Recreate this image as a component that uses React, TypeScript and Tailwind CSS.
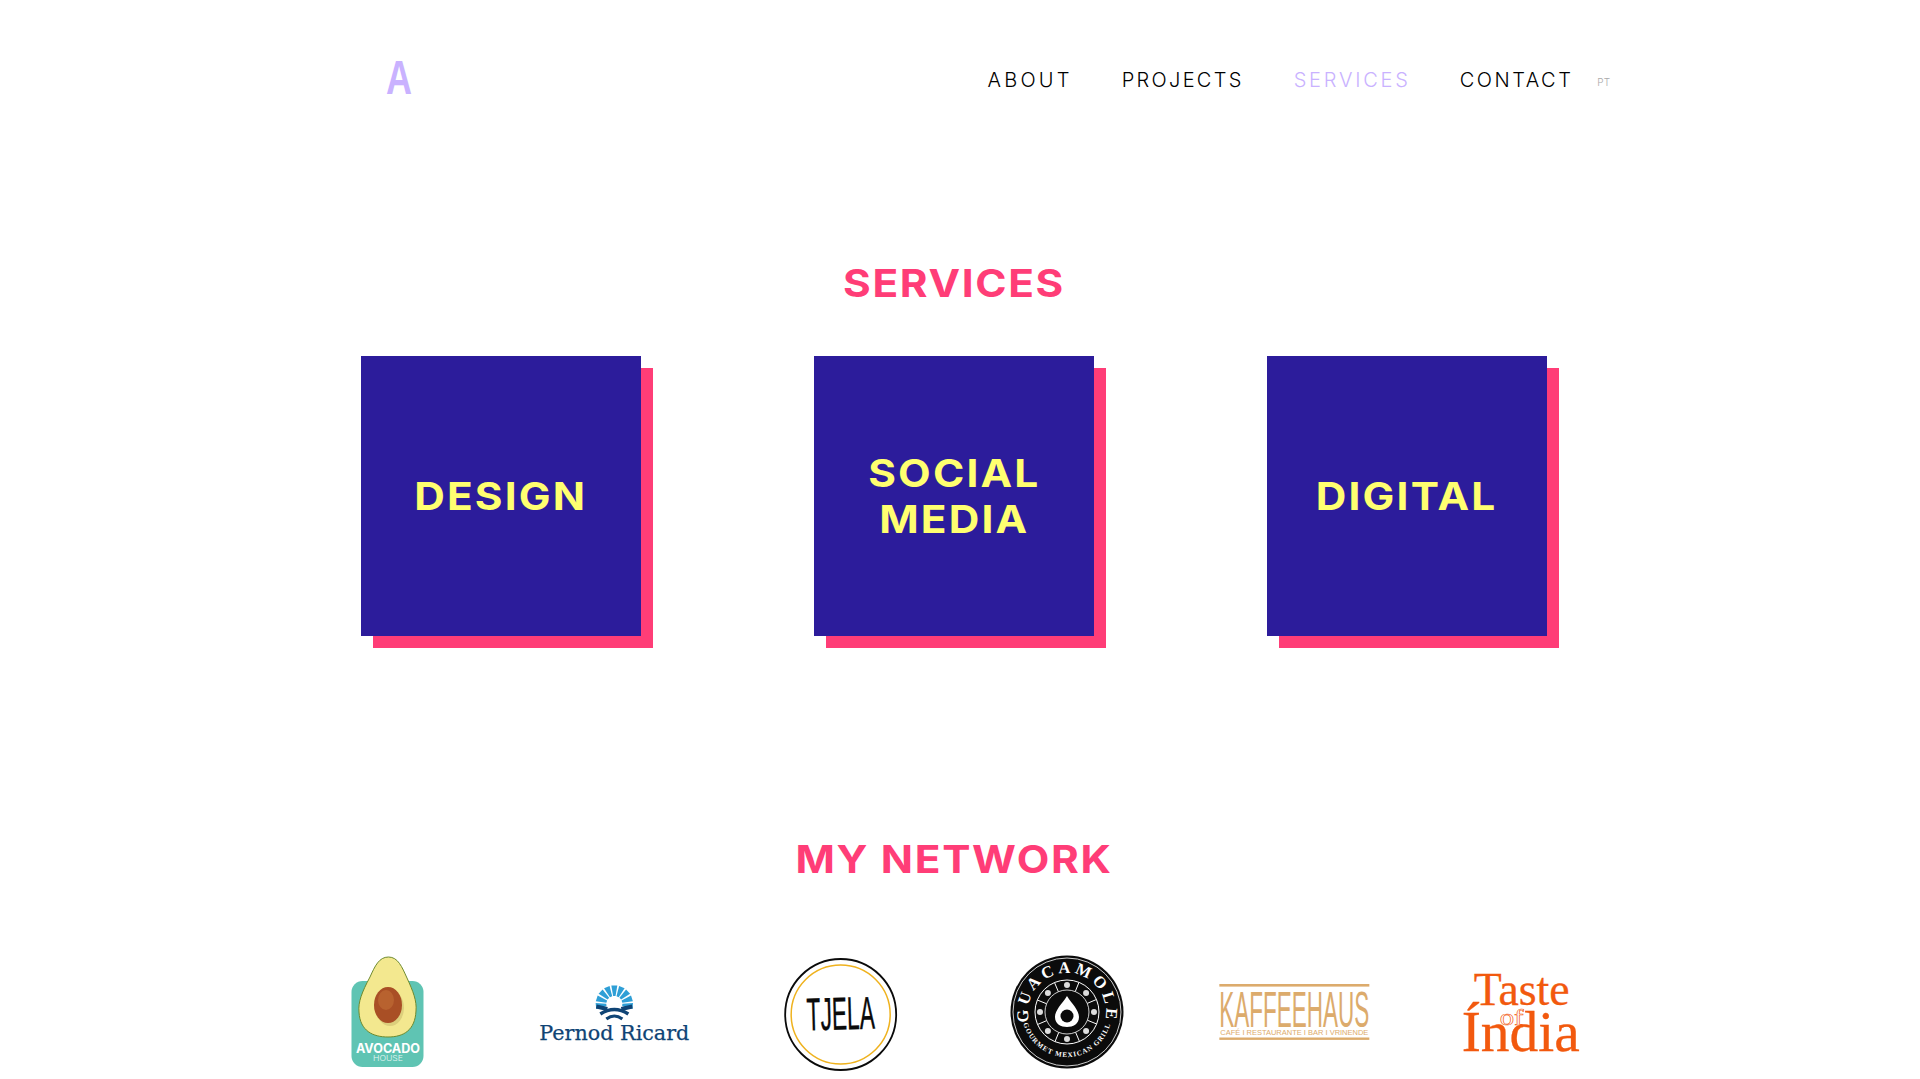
import React from "react";

const SANS = "font-['Inter','Liberation_Sans',sans-serif]";

function Logo({ i, children }: { i: number; children: React.ReactNode }) {
  const x0 = 274 + (1360 / 6) * i;
  return (
    <svg viewBox={`${x0} 950 ${1360 / 6} 129`} className="block h-[129px] w-full overflow-visible">
      {children}
    </svg>
  );
}

function Avocado() {
  return (
    <Logo i={0}>
      <rect x="351.5" y="981" width="72" height="86" rx="11" fill="#5fc4b3" />
      <path d="M388.5 957 C379 957 375 966 370 977 C362 992 358 1002 359 1012 C360 1031 373 1037 388 1037 C404 1037 415 1030 416 1011 C417 1001 413 991 407 978 C402 967 398 957 388.5 957 Z" fill="#f3e88f" stroke="#6d8a2e" strokeWidth="1" />
      <ellipse cx="390" cy="1008" rx="14" ry="18" fill="#dccf7c" />
      <ellipse cx="388" cy="1005" rx="14" ry="18" fill="#a94f25" />
      <ellipse cx="386" cy="1000" rx="8" ry="10" fill="#b8622f" />
      <text x="388" y="1053" textAnchor="middle" fontFamily="Inter" fontWeight="700" fontSize="12.5" fill="#fff" textLength="64" lengthAdjust="spacingAndGlyphs">AVOCADO</text>
      <text x="388" y="1061" textAnchor="middle" fontFamily="Inter" fontWeight="300" fontSize="7" fill="#e7f7f3" textLength="30" lengthAdjust="spacingAndGlyphs">HOUSE</text>
    </Logo>
  );
}

function Pernod() {
  const cx = 614;
  const cy = 1004;
  const rays = [-96, -72, -48, -24, 0, 24, 48, 72, 96];
  return (
    <Logo i={1}>
      {rays.map((a) => {
        const r = (a * Math.PI) / 180;
        const pt = (rad: number, off: number) =>
          `${cx + rad * Math.sin(r) + off * Math.cos(r)},${cy - rad * Math.cos(r) + off * Math.sin(r)}`;
        return <polygon key={a} points={`${pt(8, -1.2)} ${pt(8, 1.2)} ${pt(18.5, 3)} ${pt(18.5, -3)}`} fill="#2f9fd6" />;
      })}
      <path d="M596 1006.5 L607 1009 M632 1006.5 L621 1009" stroke="#0f4475" strokeWidth="4" />
      <path d="M600 1014 Q614 1005 628 1014" stroke="#0f4475" strokeWidth="3.5" fill="none" />
      <path d="M606 1019 Q614 1013 622 1019" stroke="#0f4475" strokeWidth="3" fill="none" />
      <text x="539" y="1040" fontFamily="DejaVu Serif" fontSize="21" fill="#0f4475" stroke="#0f4475" strokeWidth="0.25" textLength="150" lengthAdjust="spacingAndGlyphs">Pernod Ricard</text>
    </Logo>
  );
}

function Tjela() {
  return (
    <Logo i={2}>
      <circle cx="841" cy="1014.5" r="55.5" fill="#fff" stroke="#0a0a0a" strokeWidth="1.8" />
      <circle cx="841" cy="1014.5" r="49.5" fill="none" stroke="#efb21e" strokeWidth="1.5" />
      <text x="807" y="1029.5" fontFamily="Liberation Sans" fontSize="46" fill="#0a0a0a" stroke="#0a0a0a" strokeWidth="0.4" textLength="68" lengthAdjust="spacingAndGlyphs" transform="rotate(-1.5 841 1014)">TJELA</text>
    </Logo>
  );
}

function Guacamole() {
  const cx = 1067;
  const cy = 1012;
  const spokes = [22, 67, 112, 157, 202, 247, 292, 337];
  return (
    <Logo i={3}>
      <defs>
        <path id="g-top" d={`M ${cx - 37.7} ${cy + 10.1} A 39 39 0 1 1 ${cx + 37.7} ${cy + 10.1}`} />
        <path id="g-bot" d={`M ${cx - 43.1} ${cy + 13} A 45 45 0 0 0 ${cx + 43.1} ${cy + 13}`} />
      </defs>
      <circle cx={cx} cy={cy} r="56.5" fill="#0b0b0b" />
      <circle cx={cx} cy={cy} r="54" fill="none" stroke="#fff" strokeWidth="0.8" />
      <text fontFamily="Liberation Serif" fontWeight="700" fontSize="16.5" fill="#fff">
        <textPath href="#g-top" startOffset="50%" textAnchor="middle" letterSpacing="3.5">GUACAMOLE</textPath>
      </text>
      <text fontFamily="Liberation Serif" fontWeight="700" fontSize="7" fill="#fff">
        <textPath href="#g-bot" startOffset="50%" textAnchor="middle" letterSpacing="1">GOURMET MEXICAN GRILL</textPath>
      </text>
      <circle cx={cx} cy={cy} r="32" fill="none" stroke="#fff" strokeWidth="1" />
      <circle cx={cx} cy={cy} r="22" fill="none" stroke="#fff" strokeWidth="0.8" />
      {spokes.map((a) => (
        <line key={a} x1={cx + 22 * Math.cos((a * Math.PI) / 180)} y1={cy + 22 * Math.sin((a * Math.PI) / 180)} x2={cx + 32 * Math.cos((a * Math.PI) / 180)} y2={cy + 32 * Math.sin((a * Math.PI) / 180)} stroke="#fff" strokeWidth="1" />
      ))}
      {[0, 45, 90, 135, 180, 225, 270, 315].map((a) => (
        <circle key={a} cx={cx + 27 * Math.cos((a * Math.PI) / 180)} cy={cy + 27 * Math.sin((a * Math.PI) / 180)} r="3" fill="#ddd" />
      ))}
      <path d={`M ${cx} ${cy - 16} C ${cx - 5} ${cy - 8} ${cx - 12} ${cy - 2} ${cx - 12} ${cy + 5} C ${cx - 12} ${cy + 12} ${cx - 6} ${cy + 15} ${cx} ${cy + 15} C ${cx + 6} ${cy + 15} ${cx + 12} ${cy + 12} ${cx + 12} ${cy + 5} C ${cx + 12} ${cy - 2} ${cx + 5} ${cy - 8} ${cx} ${cy - 16} Z`} fill="#fff" />
      <circle cx={cx} cy={cy + 4} r="6.5" fill="#0b0b0b" />
    </Logo>
  );
}

function Kaffee() {
  const c = "#dcab6c";
  return (
    <Logo i={4}>
      <rect x="1219" y="984" width="150" height="2.6" fill={c} />
      <rect x="1219" y="1037.5" width="150" height="2.4" fill={c} />
      <text x="1219" y="1026.5" fontFamily="Liberation Sans" fontSize="50" fill={c} textLength="150" lengthAdjust="spacingAndGlyphs">KAFFEEHAUS</text>
      <text x="1220" y="1035" fontFamily="Liberation Sans" fontSize="7.5" fill={c} textLength="148" lengthAdjust="spacingAndGlyphs">CAFÉ I RESTAURANTE I BAR I VRINENDE</text>
    </Logo>
  );
}

function Taste() {
  const c = "#f2590e";
  return (
    <Logo i={5}>
      <text x="1474" y="1005" fontFamily="Liberation Serif" fontSize="47" fill={c} stroke={c} strokeWidth="0.3" textLength="96" lengthAdjust="spacingAndGlyphs">Taste</text>
      <text x="1500" y="1025" fontFamily="Liberation Serif" fontSize="24" fill="none" stroke={c} strokeWidth="0.6" textLength="24" lengthAdjust="spacingAndGlyphs">of</text>
      <text x="1462" y="1050.5" fontFamily="Liberation Serif" fontSize="56" fill={c} stroke={c} strokeWidth="0.3" textLength="118" lengthAdjust="spacingAndGlyphs">Índia</text>
    </Logo>
  );
}

function Card({ lines }: { lines: string[] }) {
  return (
    <div className="flex h-[280px] w-[280px] flex-col items-center justify-center bg-[#2c1c9b] shadow-[12px_12px_0_#ff3d77]">
      {lines.map((l) => (
        <span key={l} className="scale-x-[1.1] text-[38.5px] font-bold leading-[46px] tracking-[2px] text-[#ffff70]">
          {l}
        </span>
      ))}
    </div>
  );
}

export default function App() {
  return (
    <div className={`h-[1079px] w-full overflow-hidden bg-white pr-3 ${SANS}`}>
      <header className="ml-[386px] flex h-[160px] w-[1224px] items-center justify-between">
        <span className="mb-[5px] origin-left scale-x-75 font-['Liberation_Sans',sans-serif] text-[48px] font-bold leading-none text-[#c9b2ff]">A</span>
        <nav className="flex items-center text-[20px] font-light text-black">
          <a className="mr-[49px] tracking-[3.2px]">ABOUT</a>
          <a className="mr-[50px] tracking-[2.3px]">PROJECTS</a>
          <a className="mr-[49px] tracking-[2.8px] text-[#c9b2ff]">SERVICES</a>
          <a className="tracking-[2.5px]">CONTACT</a>
          <span className="ml-[24px] mt-1 text-[10px] tracking-normal text-[#aaaaaa]">PT</span>
        </nav>
      </header>

      <h2 className="mt-[99px] scale-x-[1.1] text-center text-[38.5px] font-bold leading-[48px] tracking-[1.5px] text-[#ff3d77]">SERVICES</h2>

      <section className="mx-auto mt-[49px] flex w-[1186px] justify-between">
        <Card lines={["DESIGN"]} />
        <Card lines={["SOCIAL", "MEDIA"]} />
        <Card lines={["DIGITAL"]} />
      </section>

      <h2 className="mt-[199px] scale-x-[1.1] text-center text-[38.5px] font-bold leading-[48px] tracking-[1.5px] text-[#ff3d77]">MY NETWORK</h2>

      <section className="mx-auto mt-[67px] grid w-[1360px] grid-cols-6">
        <Avocado />
        <Pernod />
        <Tjela />
        <Guacamole />
        <Kaffee />
        <Taste />
      </section>
    </div>
  );
}
